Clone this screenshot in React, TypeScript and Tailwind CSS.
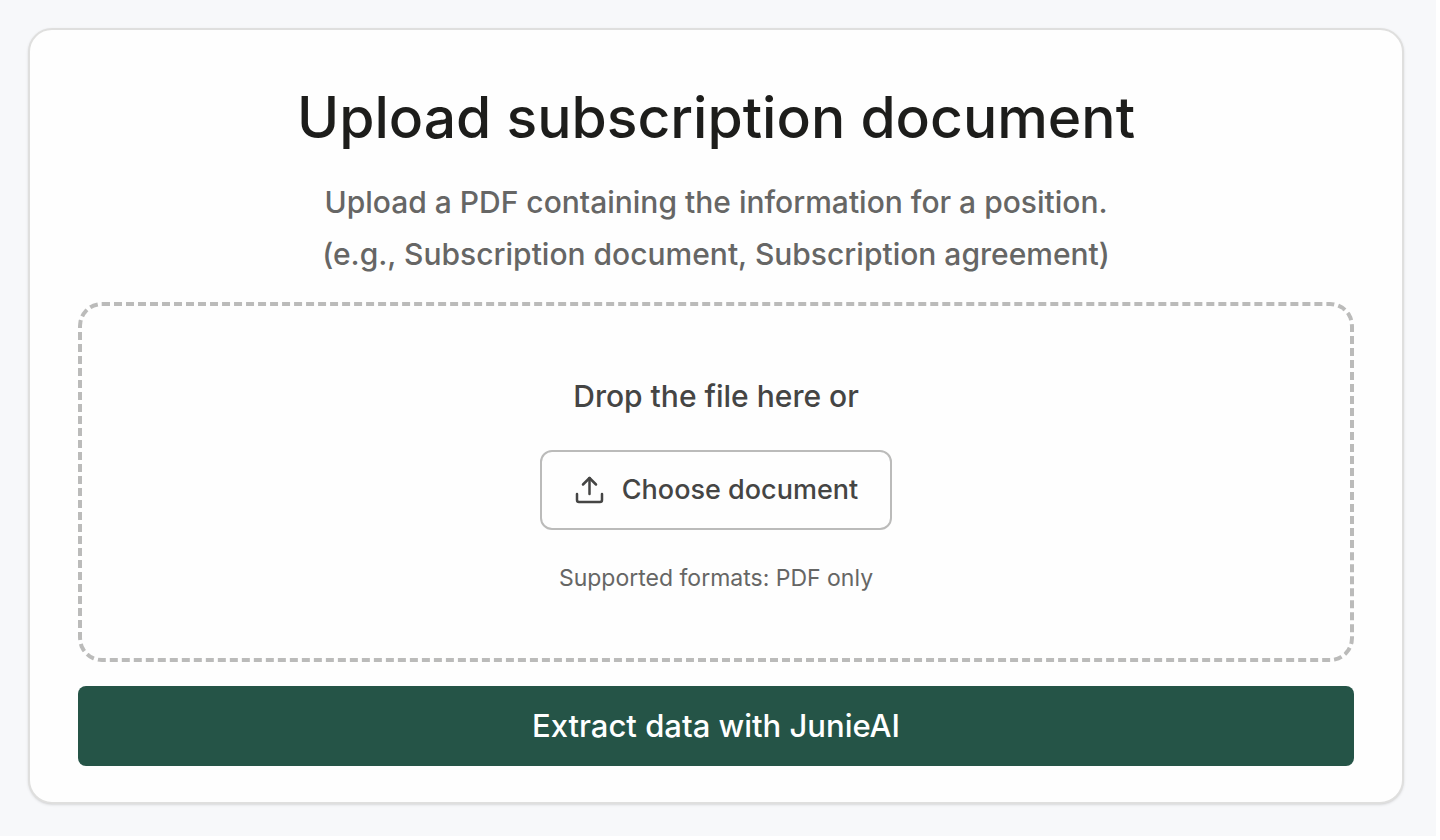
import React from 'react';

const UploadIcon: React.FC = () => (
  <svg className="size-8 shrink-0" viewBox="0 0 32 32" fill="none" stroke="currentColor" strokeWidth="2.5" strokeLinecap="round" strokeLinejoin="round" aria-hidden="true">
    <path d="M3 20v6a2 2 0 0 0 2 2h21a2 2 0 0 0 2-2v-6" />
    <path d="M15.5 20V4" />
    <path d="M9 10.5 15.5 4l6.5 6.5" />
  </svg>
);

const App: React.FC = () => {
  return (
    <div className="bg-white pr-1 pb-1 font-['Inter','Liberation_Sans',sans-serif]">
      <main className="bg-[#f7f8fa] p-7 pr-8 pb-8">
        <section className="rounded-3xl border-2 border-[#dfdfde] bg-[#fefefe] px-12 pt-12 pb-9 text-center shadow-sm">
          <h1 className="text-[57px] leading-20 font-medium text-[#1d1d1b]">Upload subscription document</h1>
          <p className="mt-[18px] text-[30px] leading-13 font-medium text-[#666665]">
            Upload a PDF containing the information for a position.
            <br />
            (e.g., Subscription document, Subscription agreement)
          </p>

          {/* Drop zone */}
          <div className="mt-[22px] flex h-90 flex-col items-center justify-center rounded-3xl border-4 border-dashed border-[#bbbbba]">
            <p className="text-[30px] leading-13 font-medium text-[#454544]">Drop the file here or</p>
            <button type="button" className="mt-7 flex h-20 items-center gap-4 rounded-xl border-2 border-[#bbbbba] px-8 text-[27px] font-medium text-[#454544]">
              <UploadIcon />
              Choose document
            </button>
            <p className="mt-8 text-[23px] leading-8 text-[#666665]">Supported formats: PDF only</p>
          </div>

          <button type="button" className="mt-6 h-20 w-full rounded-lg bg-[#255447] text-[31px] font-medium text-white">
            Extract data with JunieAI
          </button>
        </section>
      </main>
    </div>
  );
};

export default App;
